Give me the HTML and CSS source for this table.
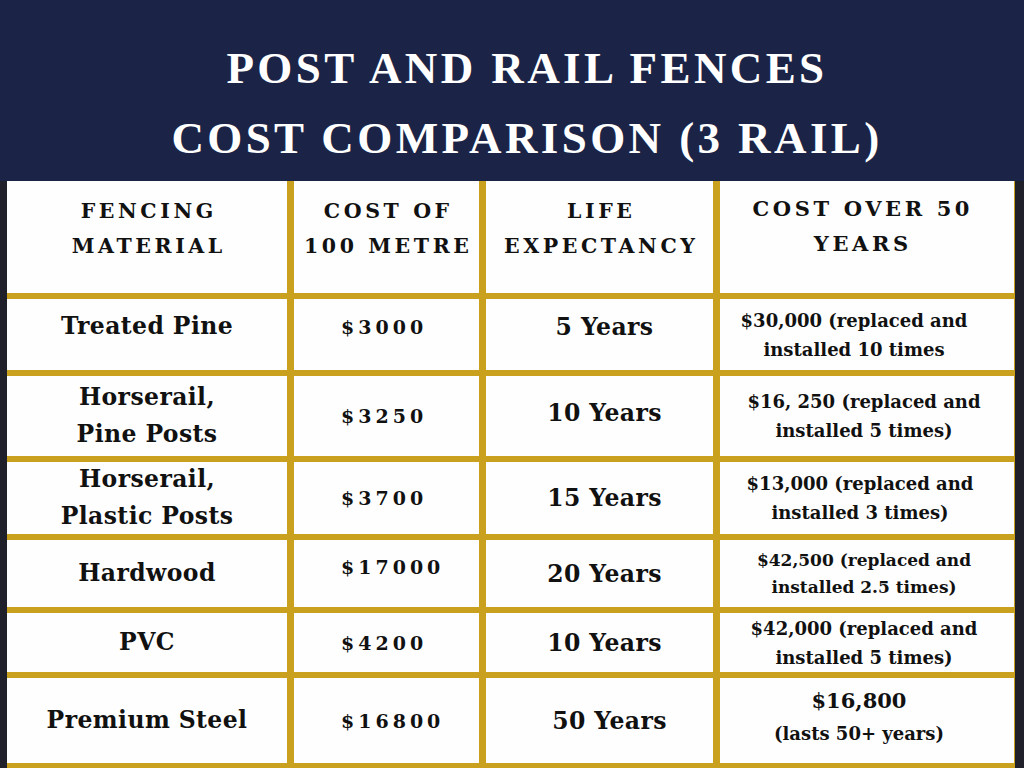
FILE: index.html
```html
<!DOCTYPE html>
<html lang="en">
<head>
<meta charset="utf-8">
<title>Post and Rail Fences Cost Comparison</title>
<link rel="stylesheet" href="styles.css">
</head>
<body>
<header class="banner">
  <h1 class="title"><span class="title-line">POST AND RAIL FENCES</span><span class="title-line">COST COMPARISON (3 RAIL)</span></h1>
</header>
<main class="frame">
  <div class="grid">
    <div class="cell head"><span class="txt">FENCING<br>MATERIAL</span></div>
    <div class="cell head"><span class="txt">COST OF<br>100 METRE</span></div>
    <div class="cell head"><span class="txt">LIFE<br>EXPECTANCY</span></div>
    <div class="cell head head-wide"><span class="txt">COST OVER 50<br>YEARS</span></div>

    <div class="cell name lift"><span class="txt">Treated Pine</span></div>
    <div class="cell price lift"><span class="txt">$3000</span></div>
    <div class="cell years lift"><span class="txt">5 Years</span></div>
    <div class="cell note note-first"><span class="txt">$30,000 (replaced and<br>installed 10 times</span></div>

    <div class="cell name"><span class="txt">Horserail,<br>Pine Posts</span></div>
    <div class="cell price"><span class="txt">$3250</span></div>
    <div class="cell years years-up"><span class="txt">10 Years</span></div>
    <div class="cell note"><span class="txt">$16, 250 (replaced and<br>installed 5 times)</span></div>

    <div class="cell name"><span class="txt">Horserail,<br>Plastic Posts</span></div>
    <div class="cell price"><span class="txt">$3700</span></div>
    <div class="cell years"><span class="txt">15 Years</span></div>
    <div class="cell note note-mid"><span class="txt">$13,000 (replaced and<br>installed 3 times)</span></div>

    <div class="cell name"><span class="txt">Hardwood</span></div>
    <div class="cell price lift-sm"><span class="txt">$17000</span></div>
    <div class="cell years"><span class="txt">20 Years</span></div>
    <div class="cell note note-sm"><span class="txt">$42,500 (replaced and<br>installed 2.5 times)</span></div>

    <div class="cell name"><span class="txt">PVC</span></div>
    <div class="cell price"><span class="txt">$4200</span></div>
    <div class="cell years"><span class="txt">10 Years</span></div>
    <div class="cell note"><span class="txt">$42,000 (replaced and<br>installed 5 times)</span></div>

    <div class="cell name"><span class="txt">Premium Steel</span></div>
    <div class="cell price"><span class="txt">$16800</span></div>
    <div class="cell years years-right"><span class="txt">50 Years</span></div>
    <div class="cell note note-last"><span class="txt"><span class="big">$16,800</span><br>(lasts 50+ years)</span></div>
  </div>
</main>
</body>
</html>
```
FILE: styles.css
```css
html, body {
  margin: 0;
  padding: 0;
}

body {
  width: 1024px;
  height: 768px;
  overflow: hidden;
  background: #1b2447;
  color: #111111;
  font-family: "DejaVu Serif", "Liberation Serif", serif;
}

.banner {
  height: 181px;
  box-sizing: border-box;
  padding: 33px 0 0 30px;
  background: #1b2447;
}

.title {
  margin: 0;
  font-family: "Liberation Serif", "DejaVu Serif", serif;
  font-weight: 700;
  font-size: 45px;
  line-height: 70px;
  letter-spacing: 3.4px;
  color: #ffffff;
  text-align: center;
}

.title-line {
  display: block;
}

.frame {
  background: #1f2029;
  padding: 0 9px 0 7px;
  height: 587px;
  box-sizing: border-box;
}

.grid {
  display: grid;
  grid-template-columns: 280px 185px 227px 294px;
  grid-template-rows: 112px 71px 80px 72px 67px 59px 85px;
  column-gap: 7px;
  row-gap: 6px;
  background: #c9a11f;
  padding-bottom: 6px;
}

.cell {
  background: #fefefe;
  display: flex;
  align-items: center;
  justify-content: center;
  text-align: center;
  font-weight: 700;
}

.txt {
  display: block;
}

.head {
  align-items: flex-start;
  padding-top: 13px;
  font-size: 20.5px;
  line-height: 35px;
  letter-spacing: 3.6px;
}

.head .txt {
  margin-right: -3.6px;
}

.head-wide {
  padding-top: 10px;
  padding-right: 12px;
  font-size: 21px;
}

.name {
  font-size: 23.5px;
  line-height: 37px;
  letter-spacing: 0.4px;
}

.price {
  justify-content: flex-start;
  padding-left: 47px;
  font-size: 19px;
  letter-spacing: 4px;
}

.years {
  padding-left: 10px;
  font-size: 23.5px;
  letter-spacing: 0.4px;
}

.years-up {
  padding-bottom: 6px;
}

.years-right {
  padding-left: 20px;
}

.note {
  font-size: 18px;
  line-height: 29px;
  padding-right: 6px;
}

.note-first {
  padding-right: 26px;
}

.note-mid {
  padding-right: 14px;
}

.note-sm {
  font-size: 17px;
  line-height: 27px;
}

.note-last {
  line-height: 32px;
  padding-bottom: 6px;
  padding-right: 16px;
}

.big {
  font-size: 21px;
}

.lift {
  padding-bottom: 16px;
}

.lift-sm {
  padding-bottom: 13px;
}
```
